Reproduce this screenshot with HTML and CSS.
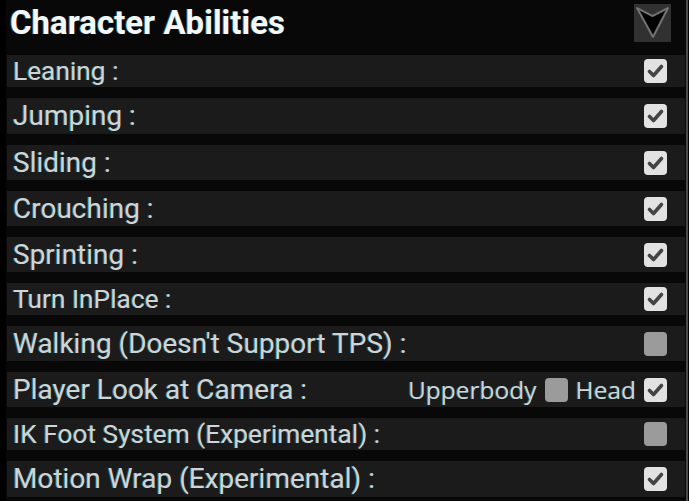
FILE: index.html
```html
<!DOCTYPE html>
<html>
<head>
<meta charset="utf-8">
<link rel="stylesheet" href="styles.css">
</head>
<body>
<div class="panel">
  <div class="header">
    <h1 class="title">Character Abilities</h1>
    <button class="dropdown" aria-label="collapse">
      <svg width="37" height="38" viewBox="0 0 37 38">
        <polygon points="3,4 18.5,12 34,4 19,33" fill="#000" stroke="#5a5a5a" stroke-width="2.4" stroke-linejoin="round"/>
        <polygon points="3,4 18.5,12 34,4 19,33" fill="none" stroke="#8a8a8a" stroke-width="0.8" stroke-linejoin="round"/>
      </svg>
    </button>
  </div>
  <div class="rows">
    <div class="row short"><span class="label">Leaning :</span><span class="cb on"></span></div>
    <div class="row tall"><span class="label">Jumping :</span><span class="cb on"></span></div>
    <div class="row"><span class="label">Sliding :</span><span class="cb on"></span></div>
    <div class="row"><span class="label">Crouching :</span><span class="cb on"></span></div>
    <div class="row"><span class="label">Sprinting :</span><span class="cb on"></span></div>
    <div class="row short"><span class="label">Turn InPlace :</span><span class="cb on"></span></div>
    <div class="row"><span class="label">Walking (Doesn't Support TPS) :</span><span class="cb"></span></div>
    <div class="row"><span class="label">Player Look at Camera :</span>
      <span class="opts"><span class="opt">Upperbody</span><span class="cb"></span><span class="opt">Head</span><span class="cb on"></span></span></div>
    <div class="row short"><span class="label">IK Foot System (Experimental) :</span><span class="cb"></span></div>
    <div class="row tall"><span class="label">Motion Wrap (Experimental) :</span><span class="cb on"></span></div>
  </div>
</div>
</body>
</html>
```
FILE: styles.css
```css
html, body {
  margin: 0;
  padding: 0;
  background: #000;
}
body {
  width: 689px;
  height: 501px;
  overflow: hidden;
  font-family: Roboto, "Liberation Sans", sans-serif;
}
.panel {
  margin-left: 6px;
  width: 680px;
  height: 501px;
  background: #080808;
  border-right: 2px solid #4c4c4c;
  box-sizing: content-box;
}
.header {
  height: 55px;
  display: flex;
  align-items: flex-start;
  justify-content: space-between;
  padding: 0 15px 0 4px;
  box-sizing: border-box;
}
.title {
  margin: 4px 0 0 0;
  font-size: 33px;
  line-height: 38px;
  font-weight: 700;
  color: #f4f8f8;
  text-shadow: -1px 0 0 #1f5a60;
  white-space: nowrap;
}
.dropdown {
  margin-top: 4px;
  width: 37px;
  height: 38px;
  padding: 0;
  border: 0;
  background: #313131;
  display: flex;
  align-items: center;
  justify-content: center;
}
.dropdown svg { display: block; }
.rows {
  display: flex;
  flex-direction: column;
  gap: 11px;
  padding: 0 1px;
}
.row {
  height: 35px;
  background: #1b1b1b;
  display: flex;
  align-items: center;
  justify-content: space-between;
  padding: 0 18px 0 6px;
}
.row.short { height: 32px; }
.row.tall { height: 36px; }
.label {
  font-size: 28px;
  line-height: 32px;
  color: #cfd5d7;
  text-shadow: -1px 0 0 #24636a;
  white-space: nowrap;
}
.row.short .label { font-size: 26.3px; }
.opts {
  display: flex;
  align-items: center;
  gap: 8px;
}
.opt {
  font-size: 24.5px;
  color: #cfd5d7;
  text-shadow: -1px 0 0 #24636a;
  font-family: "Open Sans", Roboto, sans-serif;
}
.cb {
  width: 23px;
  height: 24px;
  border-radius: 4px;
  background: #9b9b9b;
  flex: none;
}
.cb.on {
  background: #e2e2e2 url("data:image/svg+xml;utf8,<svg xmlns='http://www.w3.org/2000/svg' width='23' height='24' viewBox='0 0 23 24'><path d='M5.5 12.5 L9.5 16.5 L17.5 7.5' fill='none' stroke='%23444' stroke-width='3.6' stroke-linecap='round' stroke-linejoin='round'/></svg>") no-repeat center;
}
```
